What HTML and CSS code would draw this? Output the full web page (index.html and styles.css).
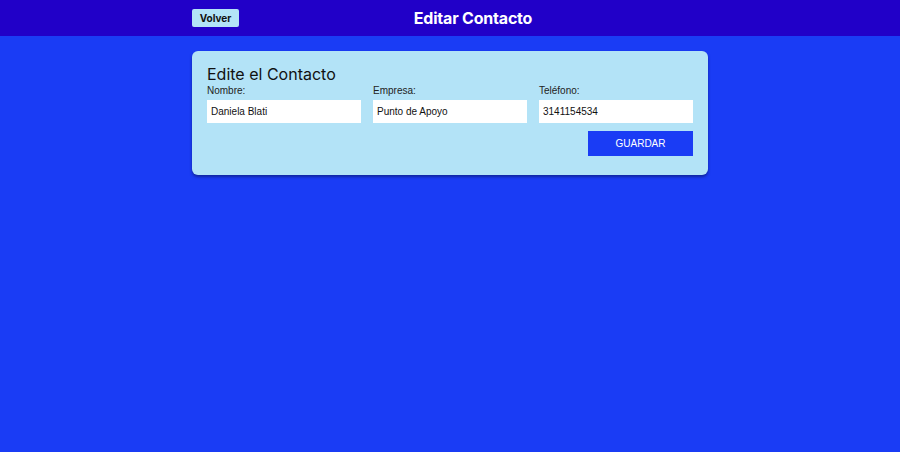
FILE: index.html
```html
<!DOCTYPE html>
<html lang="es">
<head>
<meta charset="utf-8">
<title>Editar Contacto</title>
<link rel="stylesheet" href="styles.css">
</head>
<body>
<header class="topbar">
  <div class="topbar-inner">
    <button class="back-btn">Volver</button>
    <h1 class="page-title">Editar Contacto</h1>
  </div>
</header>
<main class="content">
  <form class="card">
    <h2 class="card-title">Edite el Contacto</h2>
    <div class="fields">
      <label class="field">
        <span class="field-label">Nombre:</span>
        <input class="field-input" type="text" value="Daniela Blati">
      </label>
      <label class="field">
        <span class="field-label">Empresa:</span>
        <input class="field-input" type="text" value="Punto de Apoyo">
      </label>
      <label class="field">
        <span class="field-label">Teléfono:</span>
        <input class="field-input" type="text" value="3141154534">
      </label>
    </div>
    <div class="actions">
      <button type="button" class="save-btn">GUARDAR</button>
    </div>
  </form>
</main>
</body>
</html>
```

FILE: styles.css
```css
html, body {
  margin: 0;
  padding: 0;
}
body {
  background: #1a3cf5;
  min-height: 452px;
  font-family: "Liberation Sans", Arial, sans-serif;
}
.topbar {
  background: #2100c8;
  height: 36px;
}
.topbar-inner {
  width: 516px;
  margin: 0 auto;
  height: 36px;
  position: relative;
  display: flex;
  align-items: center;
}
.back-btn {
  background: #b3e3f7;
  border: none;
  border-radius: 2px;
  width: 47px;
  height: 18px;
  padding: 0;
  font-family: Inter, "Liberation Sans", sans-serif;
  font-weight: 700;
  font-size: 10px;
  color: #111;
}
.page-title {
  margin: 0;
  position: absolute;
  left: 281px;
  top: 8px;
  transform: translateX(-50%);
  font-family: Inter, "Open Sans", sans-serif;
  font-weight: 700;
  font-size: 16px;
  letter-spacing: -0.2px;
  color: #fff;
  white-space: nowrap;
}
.content {
  padding-top: 15px;
  display: flex;
  justify-content: center;
}
.card {
  width: 516px;
  box-sizing: border-box;
  background: #b3e3f7;
  border-radius: 6px;
  padding: 13px 15px 19px;
  box-shadow: 0 2px 3px rgba(10, 20, 90, 0.55);
}
.card-title {
  margin: 0;
  font-family: Inter, "Open Sans", sans-serif;
  font-weight: 400;
  font-size: 16px;
  color: #111;
  line-height: 20px;
}
.fields {
  display: grid;
  grid-template-columns: repeat(3, 1fr);
  gap: 12px;
  margin-top: 1px;
}
.field {
  display: flex;
  flex-direction: column;
}
.field-label {
  font-size: 10px;
  color: #222;
  line-height: 12px;
  margin-bottom: 3px;
}
.field-input {
  box-sizing: border-box;
  width: 100%;
  height: 23px;
  border: none;
  background: #fff;
  padding: 0 4px;
  font-family: "Liberation Sans", Arial, sans-serif;
  font-size: 10px;
  color: #111;
  outline: none;
}
.actions {
  display: flex;
  justify-content: flex-end;
  margin-top: 8px;
}
.save-btn {
  width: 105px;
  height: 25px;
  background: #1a3cf5;
  border: none;
  color: #fff;
  font-family: "Liberation Sans", Arial, sans-serif;
  font-size: 10px;
  padding: 0;
}
```
